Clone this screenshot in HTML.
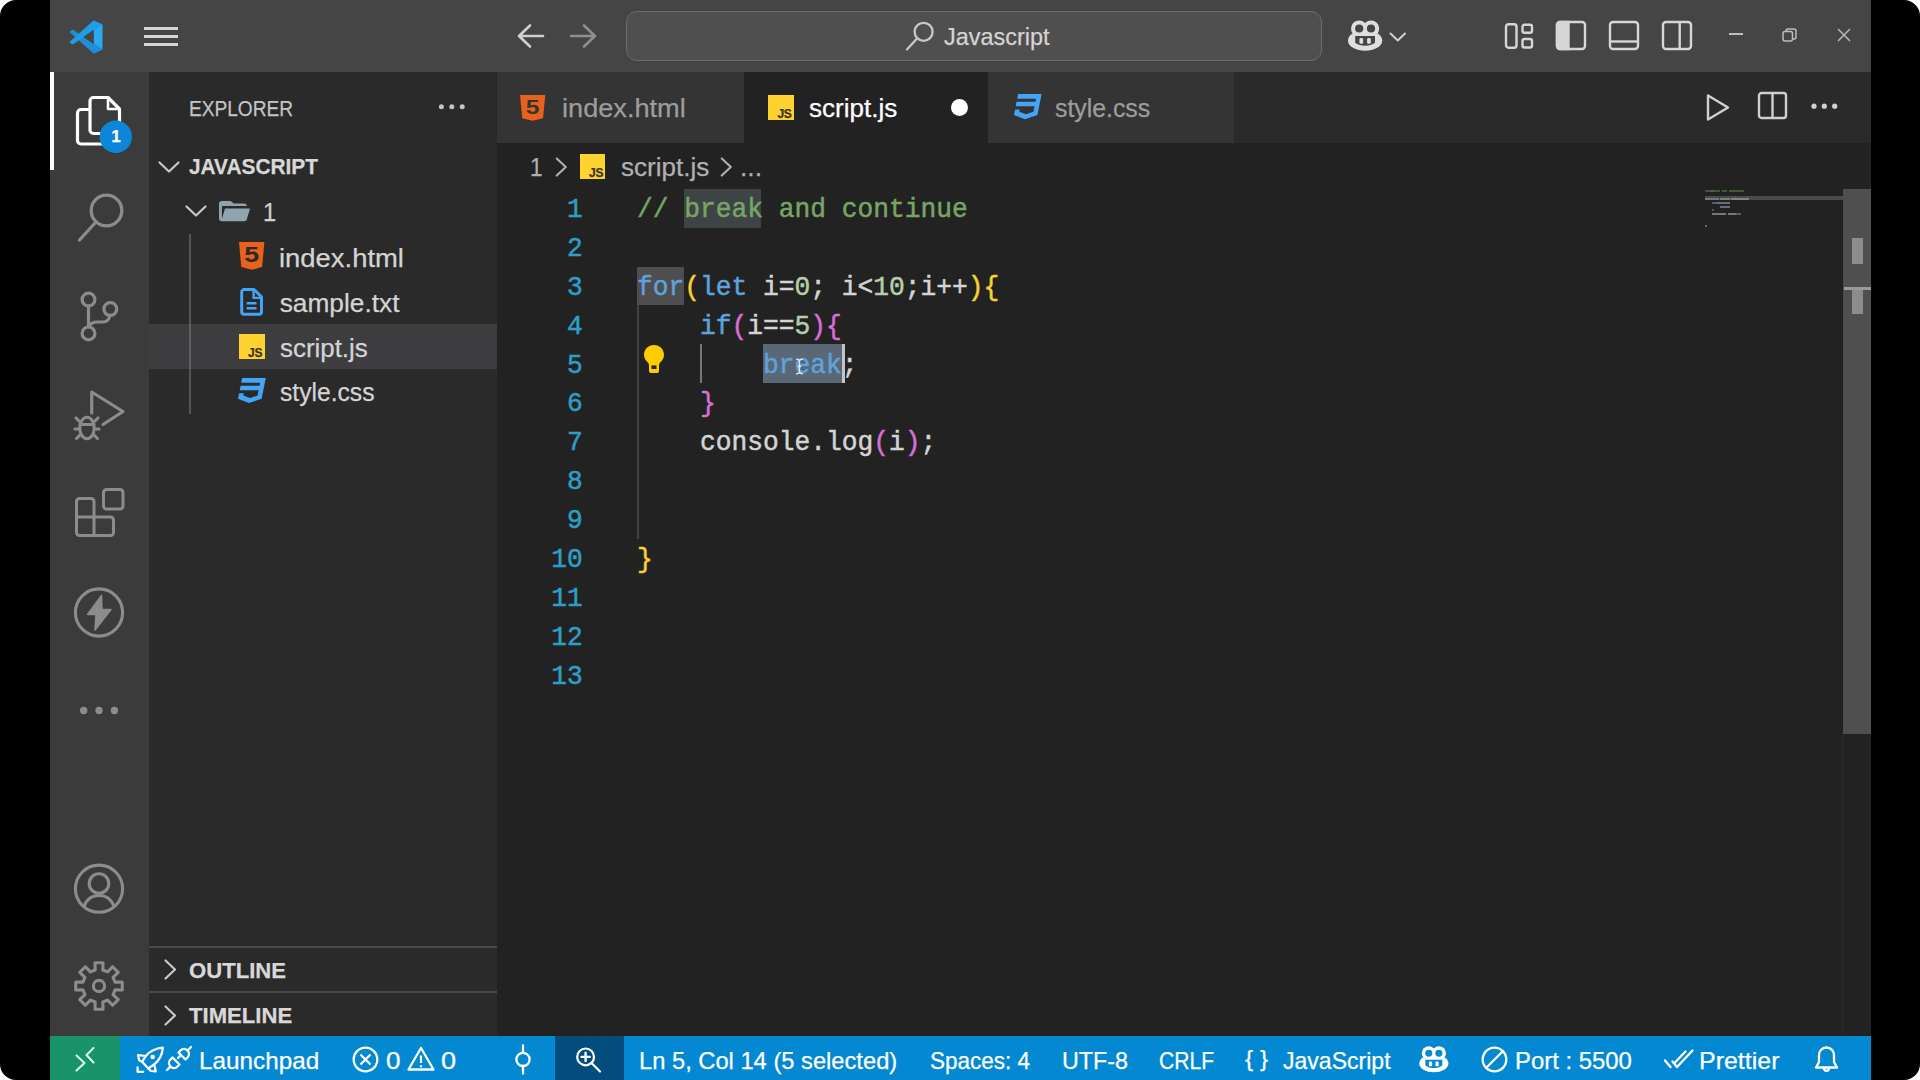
<!DOCTYPE html>
<html lang="en">
<head>
<meta charset="utf-8">
<title>script.js - Javascript - Visual Studio Code</title>
<style>
*{box-sizing:border-box;margin:0;padding:0}
html,body{width:1920px;height:1080px;overflow:hidden;background:#fff}
body{font-family:"Liberation Sans",sans-serif;color:#ccc;position:relative}
.frame{position:absolute;left:0;top:0;width:1920px;height:1080px;background:#000;border-radius:16px;overflow:hidden}
.abs{position:absolute}
.t{position:absolute;white-space:nowrap;line-height:1;-webkit-text-stroke:0.25px currentColor}
svg{position:absolute;overflow:visible}
/* regions */
#titlebar{left:50px;top:0;width:1821px;height:72px;background:#454545}
#activity{left:50px;top:72px;width:99px;height:964px;background:#3b3b3b}
#sidebar{left:149px;top:72px;width:348px;height:964px;background:#2a2a2a}
#tabs{left:497px;top:72px;width:1374px;height:71px;background:#2a2a2a}
#editor{left:497px;top:143px;width:1374px;height:893px;background:#222222}
#status{left:50px;top:1036px;width:1821px;height:44px;background:#0388d1}
.mono{font-family:"Liberation Mono","DejaVu Sans Mono",monospace;-webkit-text-stroke:0.5px}
</style>
</head>
<body>
<div class="frame">
<div id="titlebar" class="abs"></div>
<div id="activity" class="abs"></div>
<div id="sidebar" class="abs"></div>
<div id="tabs" class="abs"></div>
<div id="editor" class="abs"></div>
<div id="status" class="abs"></div>

<!-- vscode logo -->
<svg style="left:68px;top:19px" width="36" height="36" viewBox="0 0 100 100">
 <path d="M71 4 L96 16 L96 84 L71 96 L71 4Z" fill="#2aa9f0"/>
 <path d="M4 36 L13 29 L96 84 L71 96 Z" fill="#1b8fd8"/>
 <path d="M4 64 L13 71 L96 16 L71 4 Z" fill="#1f9de6"/>
 <path d="M71 30 L71 70 L43 50 Z" fill="#454545"/>
</svg>
<!-- hamburger -->
<div class="abs" style="left:144px;top:27px;width:34px;height:3px;background:#d6d6d6"></div>
<div class="abs" style="left:144px;top:35px;width:34px;height:3px;background:#d6d6d6"></div>
<div class="abs" style="left:144px;top:43px;width:34px;height:3px;background:#d6d6d6"></div>
<!-- nav arrows -->
<svg style="left:517px;top:24px" width="27" height="24" viewBox="0 0 27 24" fill="none" stroke="#d0d0d0" stroke-width="2.6" stroke-linecap="round" stroke-linejoin="round"><path d="M26 12H2M13 1.5L2 12l11 10.5"/></svg>
<svg style="left:570px;top:24px" width="27" height="24" viewBox="0 0 27 24" fill="none" stroke="#8f8f8f" stroke-width="2.6" stroke-linecap="round" stroke-linejoin="round"><path d="M1 12h24M14 1.5L25 12 14 22.500"/></svg>
<!-- search box -->
<div class="abs" style="left:625.500px;top:11px;width:696px;height:50px;border:1.500px solid #6c6c6c;border-radius:11px;background:#4f4f4f"></div>
<svg style="left:905px;top:21px" width="30" height="30" viewBox="0 0 30 30" fill="none" stroke="#c8c8c8" stroke-width="2.3" stroke-linecap="round"><circle cx="18.600" cy="10.800" r="9"/><path d="M12 17.500L2 28.500"/></svg>
<!-- copilot -->
<svg style="left:1347px;top:20px" width="36" height="31" viewBox="0 0 36 31">
 <ellipse cx="18.100" cy="20.500" rx="17.100" ry="10.200" fill="#dedede"/>
 <circle cx="12.100" cy="8.500" r="8.100" fill="#dedede"/><circle cx="24.100" cy="8.500" r="8.100" fill="#dedede"/>
 <ellipse cx="12.200" cy="8.500" rx="4.100" ry="4" fill="#454545"/>
 <ellipse cx="24" cy="8.500" rx="4.100" ry="4" fill="#454545"/>
 <path d="M8.200 16h19.800v6.700c-2.500 2-6 3-9.900 3s-7.400-1-9.900-3z" fill="#454545"/>
 <rect x="12.400" y="18" width="3.700" height="5.800" rx="1.400" fill="#dedede"/>
 <rect x="20.100" y="18" width="3.700" height="5.800" rx="1.400" fill="#dedede"/>
</svg>
<svg style="left:1389px;top:31.500px" width="18" height="11" viewBox="0 0 18 11" fill="none" stroke="#d0d0d0" stroke-width="2" stroke-linecap="round" stroke-linejoin="round"><path d="M1.500 1.500l7.300 7L16 1.500"/></svg>
<!-- layout icons -->
<svg style="left:1504px;top:22px" width="30" height="28" viewBox="0 0 30 28" fill="none" stroke="#d6d6d6" stroke-width="2.400"><rect x="2" y="2.200" width="10.500" height="23.500" rx="2.500"/><rect x="18.500" y="2.700" width="9.500" height="8" rx="2"/><rect x="18.500" y="17" width="9.500" height="8.500" rx="2"/></svg>
<svg style="left:1555px;top:20px" width="32" height="31" viewBox="0 0 32 31" fill="none" stroke="#d6d6d6" stroke-width="2.400"><rect x="2" y="2" width="28" height="27" rx="3"/><path d="M2 5a3 3 0 0 1 3-3h8.500v27H5a3 3 0 0 1-3-3z" fill="#d6d6d6"/></svg>
<svg style="left:1608px;top:20px" width="32" height="31" viewBox="0 0 32 31" fill="none" stroke="#d6d6d6" stroke-width="2.400"><rect x="2" y="2" width="28" height="27" rx="3"/><path d="M2 21.500h28"/></svg>
<svg style="left:1661px;top:20px" width="32" height="31" viewBox="0 0 32 31" fill="none" stroke="#d6d6d6" stroke-width="2.400"><rect x="2" y="2" width="28" height="27" rx="3"/><path d="M18.700 2v27"/></svg>
<!-- window controls -->
<div class="abs" style="left:1729px;top:33px;width:14px;height:2px;background:#bdbdbd"></div>
<svg style="left:1782px;top:28px" width="15" height="14" viewBox="0 0 15 14" fill="none" stroke="#bdbdbd" stroke-width="1.500"><rect x="1" y="3.500" width="9.500" height="9.500" rx="2"/><path d="M4 3.500V3a2 2 0 0 1 2-2h6a2 2 0 0 1 2 2v6a2 2 0 0 1-2 2h-1.500"/></svg>
<svg style="left:1837px;top:28px" width="14" height="14" viewBox="0 0 14 14" fill="none" stroke="#b8b8b8" stroke-width="1.500"><path d="M1 1l12 12M13 1L1 13"/></svg>
<div class="t" style="left:943.6px;top:25.0px;font-size:24.6px;color:#d4d4d4;transform:scaleX(0.9527);transform-origin:0 0;">Javascript</div>
<div class="abs" style="left:50px;top:72px;width:4px;height:98px;background:#fff"></div>
<svg style="left:50px;top:72px" width="99" height="964" viewBox="50 72 99 964" fill="none" stroke="#8c8c8c" stroke-width="3" stroke-linecap="round" stroke-linejoin="round">
 <!-- files -->
 <g stroke="#ffffff" stroke-width="3.200">
  <path d="M90 124V101a3.500 3.500 0 0 1 3.500-3.500H108l11.500 11.500V130a3.500 3.500 0 0 1-3.500 3.500H93.500A3.500 3.500 0 0 1 90 130z"/>
  <path d="M108 97.500V109h11.500" stroke-width="2.600"/>
  <path d="M89.500 109.500H81a3.500 3.500 0 0 0-3.500 3.500v27.500A3.500 3.500 0 0 0 81 144h21"/>
 </g>
 <circle cx="115.800" cy="136.700" r="16.200" fill="#0d86d8" stroke="none"/>
 <!-- search -->
 <circle cx="106.500" cy="210.500" r="15.300" stroke-width="3.300"/>
 <path d="M95.500 222.500L79.500 240" stroke-width="3.300"/>
 <!-- scm -->
 <g stroke-width="3.200"><circle cx="88.500" cy="299.600" r="6.400"/><circle cx="110.300" cy="309" r="6.400"/><circle cx="88.500" cy="333.400" r="6.400"/>
 <path d="M88.500 306v21M110 315.500c-1 4.500-3.500 6.500-7.500 6.500h-5.500c-4 0-6.500 1.500-8 4.500"/></g>
 <!-- debug -->
 <path d="M91.700 413V392L123 411.500 103 424.500" stroke-width="3.200"/>
 <ellipse cx="87" cy="428" rx="7.200" ry="10.700" stroke-width="3"/>
 <path d="M80 424.500h14" stroke-width="3.100"/>
 <path d="M79.500 421.500l-3.500-3.500M94.500 421.500l3.500-3.500M79.500 429h-4.500M94.500 429h4.500M80 435l-3.500 3.500M94 435l3.500 3.500" stroke-width="3.100"/>
 <!-- extensions -->
 <path d="M76.500 501.500a3 3 0 0 1 3-3H91a3 3 0 0 1 3 3V517h16.500a3 3 0 0 1 3 3v12.500a3 3 0 0 1-3 3h-31a3 3 0 0 1-3-3zM76.500 517H94v18.500"/>
 <rect x="103.500" y="489.500" width="19.500" height="19.500" rx="3"/>
 <!-- thunder -->
 <circle cx="99" cy="612.500" r="23.600" stroke-width="3.100"/>
 <path d="M101.500 595.500L87.500 614.500h8.500L95 630l16-20.500h-9z" fill="#8c8c8c" stroke-width="1.500"/>
 <!-- dots -->
 <g fill="#8c8c8c" stroke="none"><circle cx="83.700" cy="710.500" r="3.700"/><circle cx="99" cy="710.500" r="3.700"/><circle cx="114.400" cy="710.500" r="3.700"/></g>
 <!-- account -->
 <circle cx="99" cy="888.700" r="23.600" stroke-width="3.100"/>
 <circle cx="99" cy="883.500" r="9.800" stroke-width="3.100"/>
 <path d="M84 906.500c2.500-7 8-11 15-11s12.500 4 15 11" stroke-width="3.100"/>
 <!-- gear -->
 <path d="M95.16 969.95 L95.01 962.74 L102.99 962.74 L102.84 969.95 L107.63 971.94 L112.62 966.73 L118.27 972.38 L113.06 977.37 L115.05 982.16 L122.26 982.01 L122.26 989.99 L115.05 989.84 L113.06 994.63 L118.27 999.62 L112.62 1005.27 L107.63 1000.06 L102.84 1002.05 L102.99 1009.26 L95.01 1009.26 L95.16 1002.05 L90.37 1000.06 L85.38 1005.27 L79.73 999.62 L84.94 994.63 L82.95 989.84 L75.74 989.99 L75.74 982.01 L82.95 982.16 L84.94 977.37 L79.73 972.38 L85.38 966.73 L90.37 971.94Z" stroke-width="3.100"/>
 <circle cx="99" cy="986" r="5.600" stroke-width="3.100"/>
</svg>
<div class="t" style="left:108px;top:128px;width:16px;text-align:center;font-size:17px;font-weight:bold;color:#fff">1</div>
<!-- sec_sidebar -->
<div class="t" style="left:188.5px;top:98.3px;font-size:22px;color:#c4c4c4;transform:scaleX(0.8681);transform-origin:0 0;">EXPLORER</div>
<svg style="left:436px;top:104px" width="32" height="6" viewBox="0 0 32 6" fill="#c4c4c4"><circle cx="5.400" cy="2.800" r="2.500"/><circle cx="15.800" cy="2.800" r="2.500"/><circle cx="26.200" cy="2.800" r="2.500"/></svg>
<svg style="left:158px;top:161px" width="22" height="12" viewBox="0 0 22 12" fill="none" stroke="#c8c8c8" stroke-width="2.200" stroke-linecap="round" stroke-linejoin="round"><path d="M1.500 1.500L11 10.500 20.500 1.500"/></svg>
<div class="t" style="left:189.1px;top:156.0px;font-size:22.3px;color:#d8d8d8;font-weight:bold;transform:scaleX(0.9354);transform-origin:0 0;">JAVASCRIPT</div>
<svg style="left:185px;top:205px" width="22" height="12" viewBox="0 0 22 12" fill="none" stroke="#c8c8c8" stroke-width="2.200" stroke-linecap="round" stroke-linejoin="round"><path d="M1.500 1.500L11 10.500 20.500 1.500"/></svg>
<svg style="left:219.400px;top:200.700px" width="31.100" height="20.300" viewBox="2 4 21.210 16" preserveAspectRatio="none"><path d="M19 20H4c-1.110 0-2-.89-2-2V6c0-1.110.89-2 2-2h6l2 2h7a2 2 0 0 1 2 2H4v10l2.140-8h17.070l-2.280 8.500c-.23.87-1.010 1.500-1.930 1.500z" fill="#90a4ae"/></svg>
<div class="t" style="left:262.9px;top:199.9px;font-size:25.5px;color:#d0d0d0;transform:scaleX(0.9286);transform-origin:0 0;">1</div>
<div class="abs" style="left:189px;top:234px;width:2px;height:180px;background:#555"></div>
<div class="abs" style="left:149px;top:324px;width:348px;height:45px;background:#3d3d40"></div>
<div class="abs" style="left:189px;top:324px;width:2px;height:45px;background:#606063"></div>
<svg style="left:238.8px;top:242px" width="25.4" height="27.8" viewBox="4.070 3 15.860 18" preserveAspectRatio="none"><path d="M4.07 3h15.86L18.500 19.200 12 21l-6.500-1.800L4.070 3z" fill="#e8621c"/></svg><div class="t" style="left:238.8px;width:25.4px;text-align:center;top:244.4px;font-size:22.2px;font-weight:bold;color:#2a2a2a;-webkit-text-stroke:0;transform:scaleX(1.2)">5</div>
<div class="t" style="left:278.7px;top:245.0px;font-size:26.3px;color:#d4d4d4;transform:scaleX(1.0423);transform-origin:0 0;">index.html</div>
<svg style="left:239.7px;top:288.3px" width="23.2" height="27.7" viewBox="0 0 23 28" fill="none" stroke="#42a5f5" stroke-width="3" stroke-linejoin="round"><path d="M1.500 4a2.500 2.500 0 0 1 2.500-2.500h10l7.500 7.500v15a2.500 2.500 0 0 1-2.500 2.500H4a2.500 2.500 0 0 1-2.500-2.500z"/><path d="M13.500 2v8h8" stroke-width="2.400"/><path d="M6.500 15.500h10M6.500 20.500h10" stroke-width="2.600"/></svg>
<div class="t" style="left:279.7px;top:290.0px;font-size:26.3px;color:#d4d4d4;">sample.txt</div>
<div class="abs" style="left:238.8px;top:333.7px;width:25.9px;height:25.6px;background:#fdd231"></div><div class="t" style="left:248.1px;top:347.3px;font-size:12.0px;font-weight:bold;color:#3a3320;letter-spacing:-0.3px">JS</div>
<div class="t" style="left:279.7px;top:334.6px;font-size:26.3px;color:#d4d4d4;transform:scaleX(0.9846);transform-origin:0 0;">script.js</div>
<svg style="left:237.5px;top:378px" width="27.8" height="26.4" viewBox="2.060 3 19.880 19" preserveAspectRatio="none"><path d="M5 3l-.65 3.340h13.590L17.500 8.500H3.920l-.66 3.330h13.590l-.76 3.810-5.480 1.810-4.750-1.810.33-1.640H2.850l-.79 4 7.850 3 9.050-3 1.200-6.030.24-1.210L21.940 3H5z" fill="#42a5f5"/></svg>
<div class="t" style="left:279.8px;top:379.4px;font-size:26.3px;color:#d4d4d4;transform:scaleX(0.9370);transform-origin:0 0;">style.css</div>
<div class="abs" style="left:149px;top:946px;width:348px;height:2px;background:#4a4a4a"></div>
<div class="abs" style="left:149px;top:991px;width:348px;height:2px;background:#4a4a4a"></div>
<svg style="left:163.5px;top:959px" width="13" height="21" viewBox="0 0 13 21" fill="none" stroke="#c8c8c8" stroke-width="2.200" stroke-linecap="round" stroke-linejoin="round"><path d="M1.500 1.500L11 10.500 1.500 19.500"/></svg>
<svg style="left:163.5px;top:1004.5px" width="13" height="21" viewBox="0 0 13 21" fill="none" stroke="#c8c8c8" stroke-width="2.200" stroke-linecap="round" stroke-linejoin="round"><path d="M1.500 1.500L11 10.500 1.500 19.500"/></svg>
<div class="t" style="left:188.6px;top:960.2px;font-size:22px;color:#d8d8d8;font-weight:bold;transform:scaleX(1.0051);transform-origin:0 0;">OUTLINE</div>
<div class="t" style="left:189.3px;top:1005.2px;font-size:22px;color:#d8d8d8;font-weight:bold;transform:scaleX(1.0055);transform-origin:0 0;">TIMELINE</div>
<!-- sec_tabs -->
<div class="abs" style="left:497px;top:72px;width:247px;height:71px;background:#343434"></div>
<div class="abs" style="left:744px;top:72px;width:244px;height:71px;background:#222222"></div>
<div class="abs" style="left:988px;top:72px;width:245.500px;height:71px;background:#343434"></div>
<svg style="left:520px;top:94.5px" width="25.3" height="25.8" viewBox="4.070 3 15.860 18" preserveAspectRatio="none"><path d="M4.07 3h15.86L18.500 19.200 12 21l-6.500-1.800L4.070 3z" fill="#e8621c"/></svg><div class="t" style="left:520px;width:25.3px;text-align:center;top:96.7px;font-size:20.6px;font-weight:bold;color:#343434;-webkit-text-stroke:0;transform:scaleX(1.2)">5</div>
<div class="t" style="left:561.5px;top:95.2px;font-size:26.3px;color:#9d9d9d;transform:scaleX(1.0328);transform-origin:0 0;">index.html</div>
<div class="abs" style="left:768.2px;top:94.5px;width:25.6px;height:25.8px;background:#fdd231"></div><div class="t" style="left:777.4px;top:108.2px;font-size:12.1px;font-weight:bold;color:#3a3320;letter-spacing:-0.3px">JS</div>
<div class="t" style="left:809.1px;top:95.4px;font-size:26.3px;color:#ffffff;transform:scaleX(0.9915);transform-origin:0 0;">script.js</div>
<div class="abs" style="left:951px;top:98.700px;width:17px;height:17px;border-radius:50%;background:#fff"></div>
<svg style="left:1013.6px;top:94.2px" width="27.6" height="26.6" viewBox="2.060 3 19.880 19" preserveAspectRatio="none"><path d="M5 3l-.65 3.340h13.590L17.500 8.500H3.920l-.66 3.330h13.590l-.76 3.810-5.480 1.810-4.750-1.810.33-1.640H2.850l-.79 4 7.850 3 9.050-3 1.200-6.030.24-1.210L21.940 3H5z" fill="#42a5f5"/></svg>
<div class="t" style="left:1054.8px;top:95.4px;font-size:26.3px;color:#9d9d9d;transform:scaleX(0.9430);transform-origin:0 0;">style.css</div>
<svg style="left:1705px;top:93px" width="26" height="30" viewBox="0 0 26 30" fill="none" stroke="#d0d0d0" stroke-width="2.400" stroke-linejoin="round"><path d="M3 2.500L23 14.500 3 26.500z"/></svg>
<svg style="left:1757px;top:90.800px" width="31" height="29" viewBox="0 0 31 29" fill="none" stroke="#d0d0d0" stroke-width="2.400"><rect x="2" y="2" width="27" height="25" rx="2.500"/><path d="M15.500 2v25"/></svg>
<svg style="left:1810px;top:103px" width="30" height="7" viewBox="0 0 30 7" fill="#d0d0d0"><circle cx="4" cy="3.200" r="2.600"/><circle cx="14.300" cy="3.200" r="2.600"/><circle cx="24.700" cy="3.200" r="2.600"/></svg>
<div class="t" style="left:529.7px;top:153.6px;font-size:26.3px;color:#b0b0b0;transform:scaleX(0.8566);transform-origin:0 0;">1</div>
<svg style="left:555px;top:156.5px" width="13" height="20" viewBox="0 0 13 21" fill="none" stroke="#b0b0b0" stroke-width="2.200" stroke-linecap="round" stroke-linejoin="round"><path d="M1.500 1.500L11 10.500 1.500 19.500"/></svg>
<div class="abs" style="left:580px;top:153.7px;width:25.3px;height:25.6px;background:#fdd231"></div><div class="t" style="left:589.1px;top:167.3px;font-size:12.0px;font-weight:bold;color:#3a3320;letter-spacing:-0.3px">JS</div>
<div class="t" style="left:621.2px;top:153.6px;font-size:26.3px;color:#b0b0b0;transform:scaleX(0.9892);transform-origin:0 0;">script.js</div>
<svg style="left:720px;top:156.5px" width="13" height="20" viewBox="0 0 13 21" fill="none" stroke="#b0b0b0" stroke-width="2.200" stroke-linecap="round" stroke-linejoin="round"><path d="M1.500 1.500L11 10.500 1.500 19.500"/></svg>
<div class="t" style="left:740.4px;top:153.6px;font-size:26.3px;color:#b0b0b0;transform:scaleX(1.0061);transform-origin:0 0;">...</div>
<!-- sec_editor -->
<div class="abs" style="left:683.800px;top:188.7px;width:77.500px;height:38.9px;background:#3e4346"></div>
<div class="abs" style="left:636.500px;top:266.5px;width:47.300px;height:38.9px;background:#4e4e4e"></div>
<div class="abs" style="left:636.500px;top:305.4px;width:2px;height:233.4px;background:#424242"></div>
<div class="abs" style="left:699.500px;top:344.3px;width:2.500px;height:38.9px;background:#777"></div>
<div class="abs" style="left:763px;top:344.3px;width:78.700px;height:38.9px;background:#5a6776"></div>
<div class="abs" style="left:841.500px;top:344.3px;width:3.500px;height:38.9px;background:#c4c4c4"></div>
<div class="t mono" style="left:483px;width:104.78px;text-align:right;top:195.9px;font-size:27.5px;color:#2d9fc6;transform:scaleX(0.9544);transform-origin:100% 0;left:auto;right:1337px">1</div>
<div class="t mono" style="left:483px;width:104.78px;text-align:right;top:234.8px;font-size:27.5px;color:#2d9fc6;transform:scaleX(0.9544);transform-origin:100% 0;left:auto;right:1337px">2</div>
<div class="t mono" style="left:483px;width:104.78px;text-align:right;top:273.7px;font-size:27.5px;color:#2d9fc6;transform:scaleX(0.9544);transform-origin:100% 0;left:auto;right:1337px">3</div>
<div class="t mono" style="left:483px;width:104.78px;text-align:right;top:312.6px;font-size:27.5px;color:#2d9fc6;transform:scaleX(0.9544);transform-origin:100% 0;left:auto;right:1337px">4</div>
<div class="t mono" style="left:483px;width:104.78px;text-align:right;top:351.5px;font-size:27.5px;color:#2d9fc6;transform:scaleX(0.9544);transform-origin:100% 0;left:auto;right:1337px">5</div>
<div class="t mono" style="left:483px;width:104.78px;text-align:right;top:390.4px;font-size:27.5px;color:#2d9fc6;transform:scaleX(0.9544);transform-origin:100% 0;left:auto;right:1337px">6</div>
<div class="t mono" style="left:483px;width:104.78px;text-align:right;top:429.3px;font-size:27.5px;color:#2d9fc6;transform:scaleX(0.9544);transform-origin:100% 0;left:auto;right:1337px">7</div>
<div class="t mono" style="left:483px;width:104.78px;text-align:right;top:468.2px;font-size:27.5px;color:#2d9fc6;transform:scaleX(0.9544);transform-origin:100% 0;left:auto;right:1337px">8</div>
<div class="t mono" style="left:483px;width:104.78px;text-align:right;top:507.1px;font-size:27.5px;color:#2d9fc6;transform:scaleX(0.9544);transform-origin:100% 0;left:auto;right:1337px">9</div>
<div class="t mono" style="left:483px;width:104.78px;text-align:right;top:546.0px;font-size:27.5px;color:#2d9fc6;transform:scaleX(0.9544);transform-origin:100% 0;left:auto;right:1337px">10</div>
<div class="t mono" style="left:483px;width:104.78px;text-align:right;top:584.9px;font-size:27.5px;color:#2d9fc6;transform:scaleX(0.9544);transform-origin:100% 0;left:auto;right:1337px">11</div>
<div class="t mono" style="left:483px;width:104.78px;text-align:right;top:623.8px;font-size:27.5px;color:#2d9fc6;transform:scaleX(0.9544);transform-origin:100% 0;left:auto;right:1337px">12</div>
<div class="t mono" style="left:483px;width:104.78px;text-align:right;top:662.7px;font-size:27.5px;color:#2d9fc6;transform:scaleX(0.9544);transform-origin:100% 0;left:auto;right:1337px">13</div>
<div class="t mono" style="left:636.5px;top:195.9px;font-size:27.5px;white-space:pre;transform:scaleX(0.9544);transform-origin:0 0"><span style="color:#78a565">// break and continue</span></div>
<div class="t mono" style="left:636.5px;top:273.7px;font-size:27.5px;white-space:pre;transform:scaleX(0.9544);transform-origin:0 0"><span style="color:#5fa2dc">for</span><span style="color:#f8d232">(</span><span style="color:#5fa2dc">let</span><span style="color:#d4d4d4"> i=</span><span style="color:#b5cea8">0</span><span style="color:#d4d4d4">; i&lt;</span><span style="color:#b5cea8">10</span><span style="color:#d4d4d4">;i++</span><span style="color:#f8d232">){</span></div>
<div class="t mono" style="left:636.5px;top:312.6px;font-size:27.5px;white-space:pre;transform:scaleX(0.9544);transform-origin:0 0"><span style="color:#d4d4d4">    </span><span style="color:#5fa2dc">if</span><span style="color:#d86fd2">(</span><span style="color:#d4d4d4">i==</span><span style="color:#b5cea8">5</span><span style="color:#d86fd2">){</span></div>
<div class="t mono" style="left:636.5px;top:351.5px;font-size:27.5px;white-space:pre;transform:scaleX(0.9544);transform-origin:0 0"><span style="color:#d4d4d4">        </span><span style="color:#5fa2dc">break</span><span style="color:#d4d4d4">;</span></div>
<div class="t mono" style="left:636.5px;top:390.4px;font-size:27.5px;white-space:pre;transform:scaleX(0.9544);transform-origin:0 0"><span style="color:#d4d4d4">    </span><span style="color:#d86fd2">}</span></div>
<div class="t mono" style="left:636.5px;top:429.3px;font-size:27.5px;white-space:pre;transform:scaleX(0.9544);transform-origin:0 0"><span style="color:#d4d4d4">    console.log</span><span style="color:#d86fd2">(</span><span style="color:#d4d4d4">i</span><span style="color:#d86fd2">)</span><span style="color:#d4d4d4">;</span></div>
<div class="t mono" style="left:636.5px;top:546.0px;font-size:27.5px;white-space:pre;transform:scaleX(0.9544);transform-origin:0 0"><span style="color:#f8d232">}</span></div>
<svg style="left:643px;top:344px" width="22" height="30" viewBox="0 0 22 30"><path d="M11 1C5.300 1 1 5.300 1 10.700c0 3.300 1.600 5.700 3.600 7.600 1 1 1.400 1.900 1.400 3.200V27a2 2 0 0 0 2 2h6a2 2 0 0 0 2-2v-5.500c0-1.300.4-2.200 1.400-3.200 2-1.900 3.600-4.300 3.600-7.600C21 5.300 16.700 1 11 1z" fill="#ffcc00"/><rect x="8.500" y="21.500" width="5" height="3.500" fill="#222"/></svg>
<svg style="left:794.500px;top:358px" width="9" height="17" viewBox="0 0 9 17" fill="none" stroke="#e8e8e8" stroke-width="1.300"><path d="M1 1.200c2 0 3.500.3 3.500 2v10.600c0 1.700-1.500 2-3.500 2M8 1.200c-2 0-3.500.3-3.500 2M4.500 13.800c0 1.700 1.500 2 3.500 2M2.800 8.500h3.400"/></svg>
<div class="abs" style="left:1842px;top:734px;width:1px;height:302px;background:#2a2a2a"></div>
<div class="abs" style="left:1705px;top:196.400px;width:138px;height:3.600px;background:#4a4a4a"></div>
<div class="abs" style="left:1842.500px;top:188.600px;width:28.500px;height:545.400px;background:#4f4f4f"></div>
<div class="abs" style="left:1852px;top:238px;width:11px;height:26px;background:#8c8c8c"></div>
<div class="abs" style="left:1852px;top:289px;width:11px;height:25px;background:#8c8c8c"></div>
<div class="abs" style="left:1843.500px;top:286.800px;width:27.500px;height:3.200px;background:#9a9a9a"></div>
<div class="abs" style="left:1705px;top:190px;width:8px;height:2.200px;background:#5d7a52;opacity:.6"></div>
<div class="abs" style="left:1711px;top:190px;width:9px;height:2.200px;background:#5d7a52;opacity:.6"></div>
<div class="abs" style="left:1722px;top:190px;width:5px;height:2.200px;background:#5d7a52;opacity:.6"></div>
<div class="abs" style="left:1729px;top:190px;width:15px;height:2.200px;background:#5d7a52;opacity:.6"></div>
<div class="abs" style="left:1705px;top:198px;width:14px;height:2.200px;background:#8a96a8;opacity:.6"></div>
<div class="abs" style="left:1720px;top:198px;width:10px;height:2.200px;background:#a0a0a0;opacity:.6"></div>
<div class="abs" style="left:1731px;top:198px;width:18px;height:2.200px;background:#a8a8a8;opacity:.6"></div>
<div class="abs" style="left:1712px;top:201.5px;width:5px;height:2.200px;background:#6b87a8;opacity:.6"></div>
<div class="abs" style="left:1717px;top:201.5px;width:13px;height:2.200px;background:#a0a0a0;opacity:.6"></div>
<div class="abs" style="left:1720px;top:205.5px;width:10px;height:2.200px;background:#8da0b8;opacity:.6"></div>
<div class="abs" style="left:1712px;top:209px;width:2px;height:2.200px;background:#9a6a98;opacity:.6"></div>
<div class="abs" style="left:1712px;top:213px;width:14px;height:2.200px;background:#b0b0b0;opacity:.6"></div>
<div class="abs" style="left:1728px;top:213px;width:8px;height:2.200px;background:#b0b0b0;opacity:.6"></div>
<div class="abs" style="left:1736px;top:213px;width:5px;height:2.200px;background:#8a7a8a;opacity:.6"></div>
<div class="abs" style="left:1705px;top:224.5px;width:2px;height:2.200px;background:#a89a50;opacity:.6"></div>
<!-- sec_status -->
<div class="abs" style="left:50px;top:1036px;width:69.500px;height:44px;background:#1a936b"></div>
<div class="abs" style="left:555px;top:1036px;width:68.500px;height:44px;background:#034c7e"></div>
<svg style="left:74px;top:1046px" width="22" height="26" viewBox="0 0 22 26" fill="none" stroke="#d8fff0" stroke-width="2" stroke-linecap="round" stroke-linejoin="round"><path d="M2.500 9.500L10.500 17 2.500 24.500M19.500 2L12.500 9l7 7.500"/></svg>
<svg style="left:136px;top:1045.500px" width="28" height="28" viewBox="0 0 28 28" fill="none" stroke="#fff" stroke-width="2.200" stroke-linecap="round" stroke-linejoin="round"><path d="M26.800 1.600C20 2.200 14 5 9.800 10L6.100 15.800l6.200 6.700 5.900-4.200c5-4 8.300-10 8.600-16.700z"/><circle cx="16.700" cy="11" r="2.300" fill="#fff" stroke="none"/><path d="M9.800 10L2 9.200l1.200 5 2.900 1.600M18.200 18.300l1.600 7.100-5-.4-2.500-2.500M1.600 21.300v4.500h5.700"/></svg>
<svg style="left:166px;top:1046px" width="26" height="25" viewBox="0 0 26 25" fill="none" stroke="#fff" stroke-width="2.300" stroke-linecap="round" stroke-linejoin="round"><path d="M1 24l3.500-3.500"/><path d="M4.500 20.500c-2-2-2-5 0-7l2-2 7 7-2 2c-2 2-5 2-7 0z"/><path d="M12 12l3-3M25 1l-3.500 3.500"/><path d="M21.500 4.500c2 2 2 5 0 7l-2 2-7-7 2-2c2-2 5-2 7 0z"/></svg>
<div class="t" style="left:199.4px;top:1048.7px;font-size:23.8px;color:#ffffff;transform:scaleX(1.0205);transform-origin:0 0;">Launchpad</div>
<svg style="left:352px;top:1045.500px" width="27" height="27" viewBox="0 0 27 27" fill="none" stroke="#fff" stroke-width="2.300"><circle cx="13.500" cy="13.500" r="11.800"/><path d="M8.500 8.500l10 10M18.500 8.500l-10 10"/></svg>
<div class="t" style="left:386.2px;top:1048.7px;font-size:23.8px;color:#ffffff;transform:scaleX(1.0942);transform-origin:0 0;">0</div>
<svg style="left:407px;top:1046px" width="28" height="25" viewBox="0 0 28 25" fill="none" stroke="#fff" stroke-width="2.300" stroke-linejoin="round"><path d="M14 2L26.500 23.500h-25z"/><path d="M14 9.500v7.500M14 19.300v2" stroke-width="2.200"/></svg>
<div class="t" style="left:441.2px;top:1048.7px;font-size:23.8px;color:#ffffff;transform:scaleX(1.1380);transform-origin:0 0;">0</div>
<svg style="left:513px;top:1044px" width="20" height="31" viewBox="0 0 20 31" fill="none" stroke="#fff" stroke-width="2.300" stroke-linecap="round"><circle cx="10" cy="15.400" r="6.600"/><path d="M10 1.500v7M10 22v7.500"/></svg>
<svg style="left:575px;top:1046px" width="27" height="27" viewBox="0 0 27 27" fill="none" stroke="#fff" stroke-width="2.200" stroke-linecap="round"><circle cx="10.600" cy="10.900" r="8.400"/><path d="M17 17.500l8 8"/><path d="M6.500 10.900h8.200M10.600 6.800v8.200" stroke-width="2.400"/></svg>
<div class="t" style="left:639.1px;top:1048.7px;font-size:23.8px;color:#ffffff;transform:scaleX(0.9959);transform-origin:0 0;">Ln 5, Col 14 (5 selected)</div>
<div class="t" style="left:929.5px;top:1048.7px;font-size:23.8px;color:#ffffff;transform:scaleX(0.9461);transform-origin:0 0;">Spaces: 4</div>
<div class="t" style="left:1061.6px;top:1048.7px;font-size:23.8px;color:#ffffff;transform:scaleX(0.9796);transform-origin:0 0;">UTF-8</div>
<div class="t" style="left:1159.1px;top:1048.7px;font-size:23.8px;color:#ffffff;transform:scaleX(0.8854);transform-origin:0 0;">CRLF</div>
<div class="t" style="left:1244.9px;top:1047.9px;font-size:22px;color:#ffffff;transform:scaleX(1.1089);transform-origin:0 0;">{ }</div>
<div class="t" style="left:1282.5px;top:1048.7px;font-size:23.8px;color:#ffffff;transform:scaleX(0.9679);transform-origin:0 0;">JavaScript</div>
<svg style="left:1417.500px;top:1046px" width="31.500" height="26.500" viewBox="0 0 36 31"><ellipse cx="18.100" cy="20.500" rx="17.100" ry="10.200" fill="#fff"/><circle cx="12.100" cy="8.500" r="8.100" fill="#fff"/><circle cx="24.100" cy="8.500" r="8.100" fill="#fff"/><ellipse cx="12.200" cy="8.500" rx="4.100" ry="4" fill="#0388d1"/><ellipse cx="24" cy="8.500" rx="4.100" ry="4" fill="#0388d1"/><path d="M8.200 16h19.800v6.700c-2.500 2-6 3-9.900 3s-7.400-1-9.900-3z" fill="#0388d1"/><rect x="12.400" y="18" width="3.700" height="5.800" rx="1.400" fill="#fff"/><rect x="20.100" y="18" width="3.700" height="5.800" rx="1.400" fill="#fff"/></svg>
<svg style="left:1481px;top:1045.500px" width="27" height="27" viewBox="0 0 27 27" fill="none" stroke="#fff" stroke-width="2.300"><circle cx="13.500" cy="13.500" r="11.800"/><path d="M5.500 21.500L21.500 5.500"/></svg>
<div class="t" style="left:1515.0px;top:1048.7px;font-size:23.8px;color:#ffffff;transform:scaleX(1.0040);transform-origin:0 0;">Port : 5500</div>
<svg style="left:1663px;top:1049px" width="31" height="20" viewBox="0 0 31 20" fill="none" stroke="#fff" stroke-width="2.300" stroke-linecap="round" stroke-linejoin="round"><path d="M2 11.500l5.500 6.500M9.500 12.500L14 18 29.500 1.500M22.500 2.500L12 13.500"/></svg>
<div class="t" style="left:1699.0px;top:1048.7px;font-size:23.8px;color:#ffffff;transform:scaleX(1.0487);transform-origin:0 0;">Prettier</div>
<svg style="left:1814px;top:1045.500px" width="25" height="27" viewBox="0 0 25 27" fill="none" stroke="#fff" stroke-width="2.300" stroke-linejoin="round" stroke-linecap="round"><path d="M12.500 1.500c-4.500 0-7.500 3.500-7.500 8v6.500L2 21.500h21L20 16V9.500c0-4.500-3-8-7.500-8z"/><path d="M10 22c0 1.500 1 2.800 2.500 2.800S15 23.500 15 22"/></svg>
</div>
</body>
</html>
